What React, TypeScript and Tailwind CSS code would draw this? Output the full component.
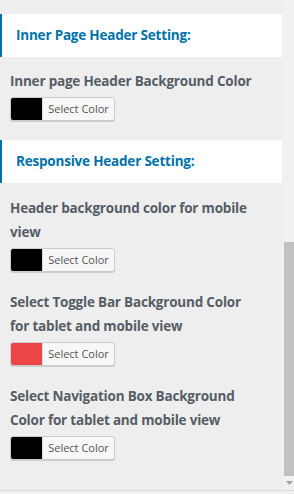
import React from "react";

type Setting = { label: string[]; color: string };

const ColorButton = ({ color }: { color: string }) => (
  <button className="mt-1 flex h-[24px] w-[105px] items-stretch overflow-hidden rounded-[3px] border border-[#cccccc] bg-[#f7f7f7] shadow-[0_1px_0_#cccccc]">
    <span className="w-[31px] shrink-0" style={{ backgroundColor: color }} />
    <span className="flex flex-1 items-center justify-center border-l border-[#dddddd] text-[11px] text-[#555555]">
      Select Color
    </span>
  </button>
);

const SectionHeader = ({ title }: { title: string }) => (
  <div className="flex h-[43px] items-center border-l-2 border-[#0073aa] bg-white pl-[14px]">
    <h3 className="text-[13.5px] font-bold tracking-[-0.2px] text-[#0073aa]">{title}</h3>
  </div>
);

const SettingRow = ({ setting }: { setting: Setting }) => (
  <div className="px-[10px]">
    <p className="text-[13.5px] font-bold leading-[24px] tracking-[-0.2px] text-[#555d66]">
      {setting.label.map((line, i) => (
        <span key={i} className="block">
          {line}
        </span>
      ))}
    </p>
    <ColorButton color={setting.color} />
  </div>
);

const responsive: Setting[] = [
  { label: ["Header background color for mobile", "view"], color: "#000000" },
  {
    label: ["Select Toggle Bar Background Color", "for tablet and mobile view"],
    color: "#ec4545",
  },
  {
    label: ["Select Navigation Box Background", "Color for tablet and mobile view"],
    color: "#000000",
  },
];

export default function App() {
  return (
    <div
      className="flex h-[494px] w-[294px] flex-col overflow-hidden bg-[#eeeeee]"
      style={{ fontFamily: '"Open Sans", "Noto Sans", sans-serif' }}
    >
      <div className="flex flex-1">
        <div className="w-[282px] pt-[14px]">
          <SectionHeader title="Inner Page Header Setting:" />
          <div className="mt-[12px]">
            <SettingRow
              setting={{ label: ["Inner page Header Background Color"], color: "#000000" }}
            />
          </div>
          <div className="mt-[19px]">
            <SectionHeader title="Responsive Header Setting:" />
          </div>
          <div className="mt-[13px] flex flex-col gap-[18px]">
            {responsive.map((s, i) => (
              <SettingRow key={i} setting={s} />
            ))}
          </div>
        </div>
        <div className="flex w-[12px] flex-col bg-[#f1f1f1] pl-[2px]">
          <div className="h-[242px]" />
          <div className="h-[234px] bg-[#c1c1c1]" />
          <div className="flex h-[14px] items-center justify-center">
            <svg width="7" height="4" viewBox="0 0 7 4">
              <path d="M0 0h7L3.5 4z" fill="#a3a3a3" />
            </svg>
          </div>
        </div>
      </div>
      <div className="h-[4px] border-t border-[#dcdcdc] bg-[#f1f1f1]" />
    </div>
  );
}
